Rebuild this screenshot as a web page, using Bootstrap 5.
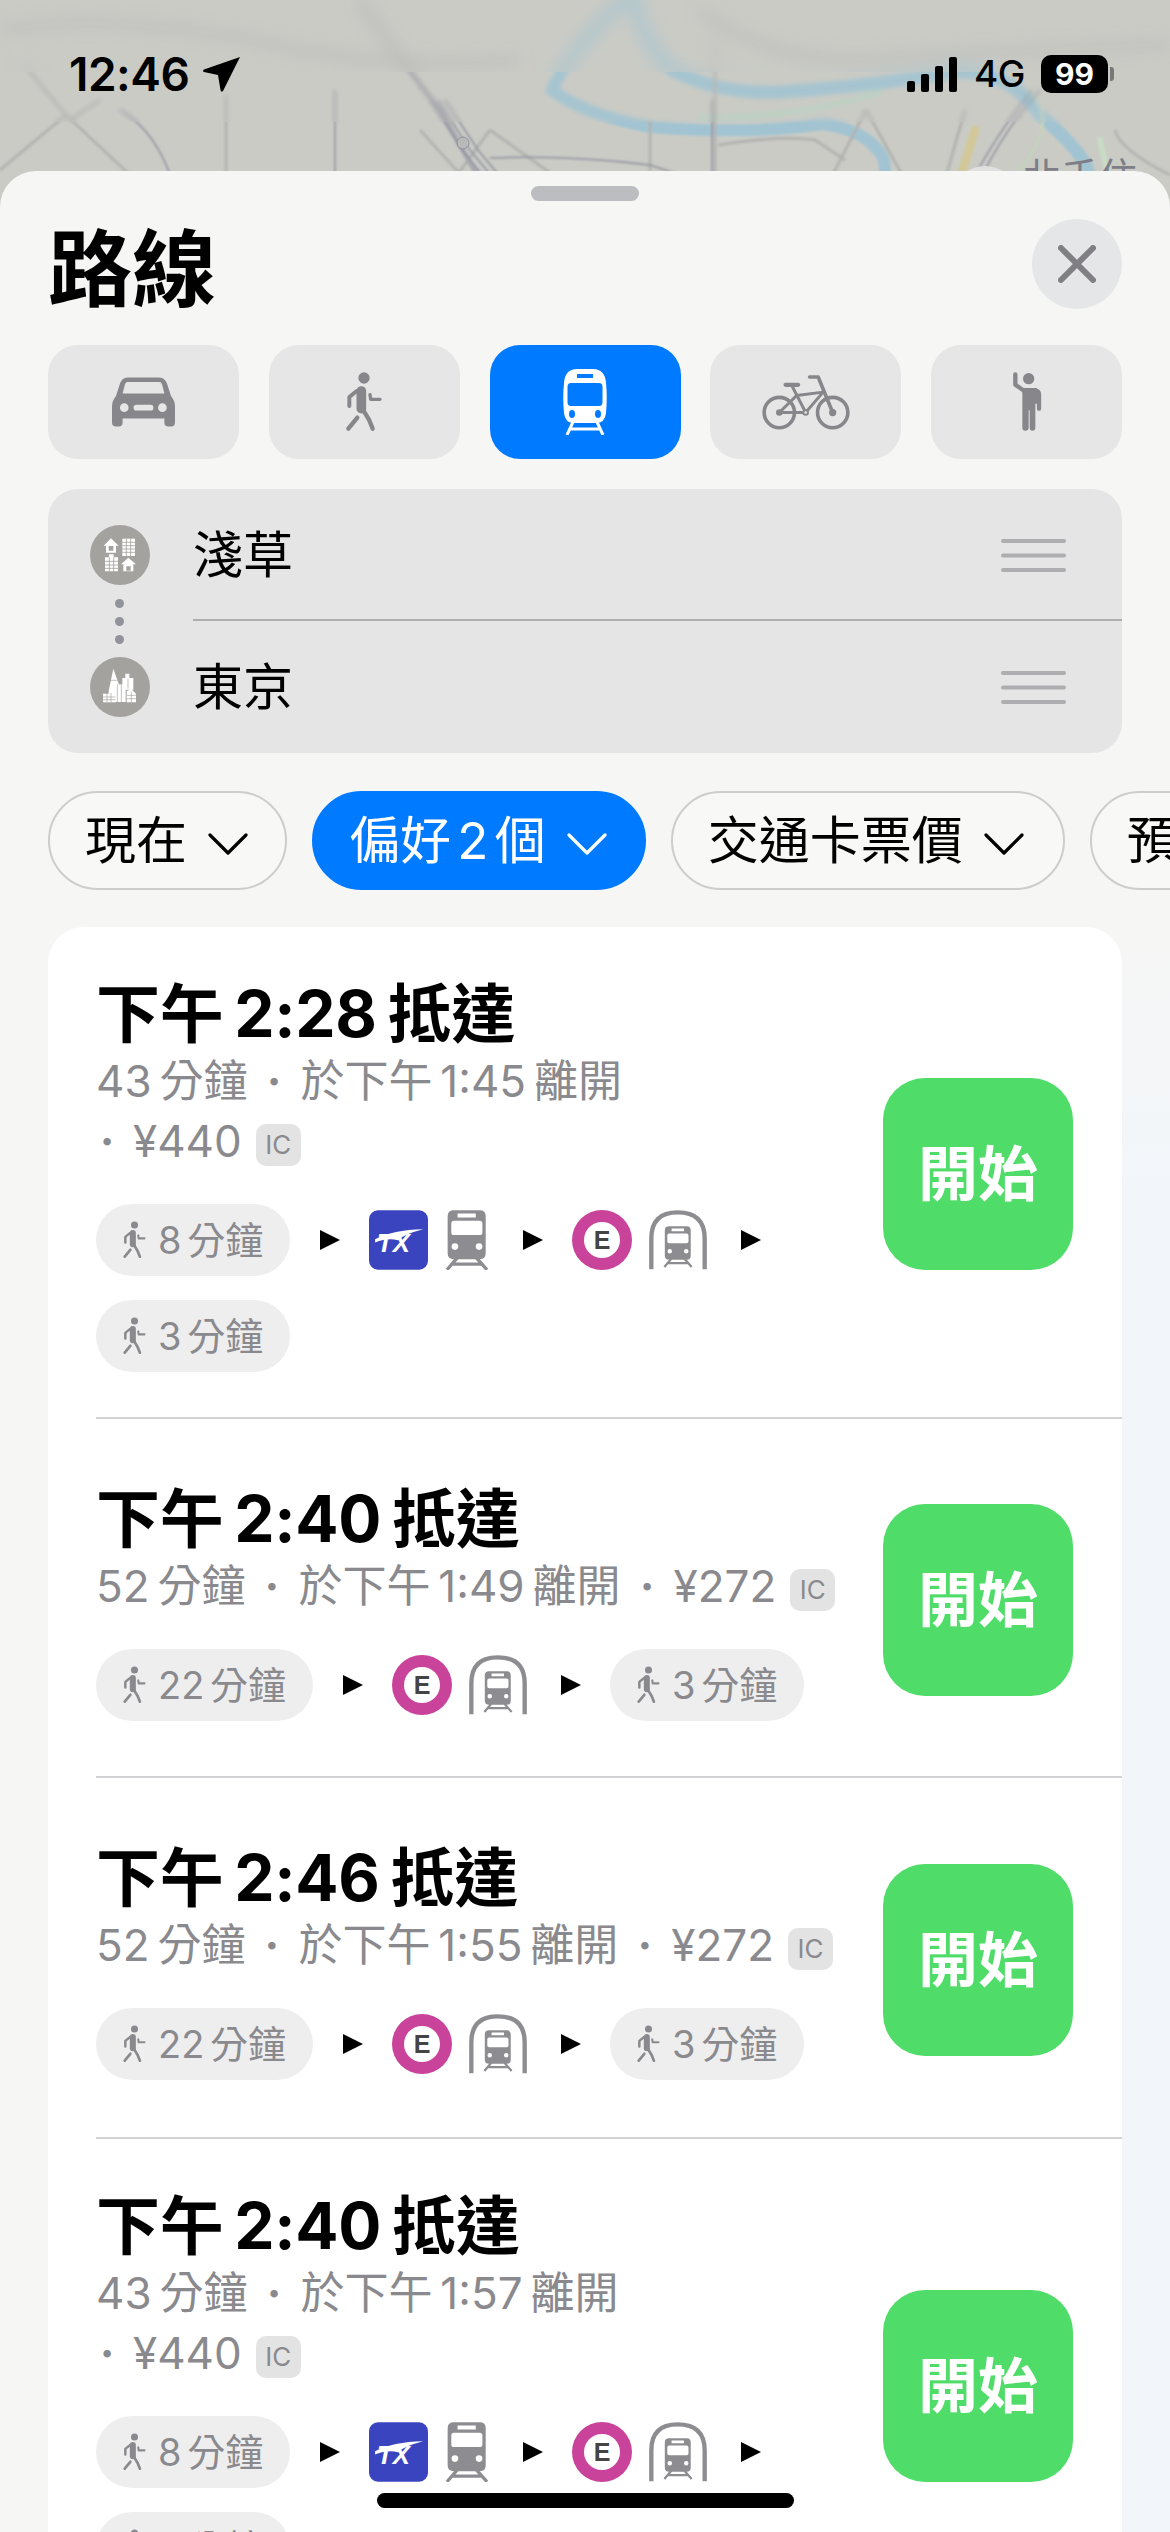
<!DOCTYPE html>
<html lang="zh-Hant">
<head>
<meta charset="utf-8">
<title>路線</title>
<link href="https://cdn.jsdelivr.net/npm/bootstrap@5.3.0/dist/css/bootstrap.min.css" rel="stylesheet">
<style>
html,body{margin:0;background:#c9cac4;}
body{font-family:Inter,"Noto Sans CJK TC",sans-serif;color:#000;}
.phone{position:relative;width:1170px;height:2532px;overflow:hidden;}
.mapbg{position:absolute;left:0;top:0;width:1170px;height:200px;}
.statusbar{position:relative;height:171px;padding:51px 56px 0 69px;}
.clock{font-size:46px;font-weight:600;line-height:46px;letter-spacing:-.5px;}
.arrowgap{margin-left:14px;}
.netlabel{font-size:37px;font-weight:500;line-height:46px;letter-spacing:-.5px;}
.batt{width:67px;height:38px;border-radius:10px;background:#000;color:#fff;font-size:30px;font-weight:700;line-height:38px;text-align:center;}
.battnub{width:4px;height:14px;border-radius:0 3px 3px 0;background:#777;margin-left:2px;}
.sheet{position:relative;height:2361px;border-radius:36px 36px 0 0;padding:15px 48px 0;background:#f6f6f5;}
.sheet-tint{position:absolute;right:0;top:760px;bottom:0;width:48px;background:linear-gradient(180deg,#f6f6f5,#f2f6fa 16%);}
.grabber{width:108px;height:15px;border-radius:8px;background:#bcbdc0;margin:0 auto 18px;}
.pagetitle{font-size:84px;font-weight:700;line-height:90px;margin:6px 0 -6px 0;}
.closer{width:90px;height:90px;border-radius:50%;background:#e5e6e7;border:0;padding:0;}
.modes{margin-top:36px;}
.mode{width:191px;height:114px;border-radius:30px;background:#e6e6e6;border:0;color:#87878b;}
.mode.on{background:#007aff;color:#fff;}
.locbox{position:relative;margin-top:30px;height:264px;border-radius:30px;background:#e5e5e6;}
.locrow{height:132px;padding-left:42px;}
.placeicon{width:60px;height:60px;flex:none;}
.locbody{margin-left:43px;padding-right:56px;font-size:50px;line-height:60px;}
.locrow:first-child .locbody{border-bottom:2px solid #aeaeb0;padding-top:2px;}
.handle{width:65px;height:33px;flex:none;}
.locdots{position:absolute;left:67px;top:110px;width:10px;}
.locdots i{display:block;width:9px;height:9px;border-radius:50%;background:#92929a;margin-bottom:9px;}
.chips{margin-top:38px;width:1200px;gap:25px;}
.chip{height:99px;border-radius:50px;border:2px solid #cdcdcd;background:#f8f8f7;color:#000;font-size:51px;line-height:95px;padding:0 37px 0 35px;white-space:nowrap;flex:none;word-spacing:-8px;}
.chip.on{background:#007aff;border-color:#007aff;color:#fff;}
.chip.chipwide{padding-right:39px;}
.chip svg{width:40px;height:22px;margin-left:21px;vertical-align:4px;}
.routes{margin-top:37px;background:#fff;border-radius:36px 36px 0 0;padding-left:48px;height:1700px;}
.route{border-bottom:2px solid #d2d2d4;padding-right:49px;align-items:flex-start;}
.route.tall{height:492px;}
.route.tall>.leftcol{padding-top:50px;}
.route.short{height:359px;}
.route.short>.leftcol{padding-top:63px;}
.route.short2{height:361px;}
.arrive{font-size:64px;font-weight:700;line-height:74px;white-space:nowrap;letter-spacing:-.3px;word-spacing:-4px;}
.meta{height:60px;font-size:44px;line-height:60px;color:#8a8a8e;white-space:nowrap;word-spacing:-4.5px;}
.sep{display:inline-block;width:53px;text-align:center;font-weight:700;}
.sep.sepfirst{width:22px;margin-right:15px;}
.ic{display:inline-block;min-width:45px;height:42px;border-radius:10px;background:#e3e3e3;font-size:26px;line-height:42px;text-align:center;margin-left:14px;vertical-align:3px;}
.legs{margin-top:33px;}
.legs+.legs{margin-top:24px;}
.walkpill{height:72px;border-radius:36px;background:#eee;color:#8a8a8e;font-size:38px;line-height:72px;padding:0 27px 0 26px;white-space:nowrap;flex:none;word-spacing:-5px;}
.walkpill svg{width:25px;height:42px;margin-right:11px;}
.tri{width:20px;height:20px;flex:none;margin:0 29px 0 30px;}
.lg{flex:none;height:60px;}
.lg+.tri{margin-left:34px;}
.lgpair{margin-right:17px;}
.go{width:190px;height:192px;border-radius:42px;background:#4fdc68;color:#fff;border:0;font-size:60px;font-weight:600;line-height:1;flex:none;padding:0;margin-top:4px;}
.homebar{position:absolute;left:377px;top:2493px;width:417px;height:15px;border-radius:8px;background:#000;}
</style>
</head>
<body>
<svg width="0" height="0" class="position-absolute">
  <defs>
    <symbol id="walk" viewBox="910 95 120 180">
      <circle cx="970" cy="113" r="17" fill="currentColor"/>
      <g fill="none" stroke="currentColor" stroke-linecap="round" stroke-linejoin="round">
        <path d="M962 152 V205" stroke-width="29"/>
        <path d="M965 205 L985 238 L996 265" stroke-width="13"/>
        <path d="M950 232 L923 265" stroke-width="13"/>
        <path d="M948 152 L926 170 V197" stroke-width="12"/>
        <path d="M988 163 L990 177 H1018" stroke-width="10"/>
      </g>
    </symbol>
    <symbol id="train" viewBox="285 60 133 180">
      <path fill="currentColor" fill-rule="evenodd" d="M312 60 H390 Q408 60 408 78 V190 Q408 208 390 208 H312 Q293 208 293 190 V78 Q293 60 312 60 Z M323 70 V82 H378 V70 Z M312 92 Q304 92 304 100 V127 Q304 135 312 135 H390 Q398 135 398 127 V100 Q398 92 390 92 Z M315 160 A10 10 0 1 0 315 180 A10 10 0 1 0 315 160 Z M388 160 A10 10 0 1 0 388 180 A10 10 0 1 0 388 160 Z"/>
      <path fill="none" stroke="currentColor" stroke-width="10" d="M322 204 L291 240 M380 204 L412 240 M308 223 H394"/>
    </symbol>
    <symbol id="trainmode" viewBox="0 0 44 66">
      <path fill="currentColor" fill-rule="evenodd" d="M14 0 H30 Q42 0 43 14 Q44.500 28 43 44 Q42 54 33 54 H11 Q2 54 1 44 Q-.5 28 1 14 Q2 0 14 0 Z M14 5 V9 H30 V5 Z M8 14 Q4.500 14 4.500 18 V33 Q4.500 37 8 37 H36 Q39.500 37 39.500 33 V18 Q39.500 14 36 14 Z M9 41 A3 4 0 1 0 9 49 A3 4 0 1 0 9 41 Z M35 41 A3 4 0 1 0 35 49 A3 4 0 1 0 35 41 Z"/>
      <path fill="none" stroke="currentColor" stroke-width="3" d="M10 53 L4 66 M34 53 L40 66 M7 60 H37"/>
    </symbol>
    <symbol id="tunnel" viewBox="895 60 172 180">
      <path fill="none" stroke="#8d8d91" stroke-width="13" d="M901 238 V145 Q901 67 980 67 Q1061 67 1061 145 V238"/>
      <use href="#train" x="936" y="103" width="90" height="134" color="#8d8d91"/>
    </symbol>
    <symbol id="txlogo" viewBox="60 60 174 175">
      <rect x="60" y="60" width="174" height="175" rx="26" fill="#3a44bf"/>
      <path fill="#fff" d="M78 145 Q130 118 220 116 Q165 130 145 148 Q115 140 78 155 Z"/>
      <text x="132" y="183" text-anchor="middle" fill="#fff" font-family="Liberation Sans" font-weight="700" font-style="italic" font-size="76">TX</text>
    </symbol>
    <symbol id="eline" viewBox="0 0 60 60">
      <circle cx="30" cy="30" r="30" fill="#c9439a"/>
      <circle cx="30" cy="30" r="18" fill="#fff"/>
      <text x="30" y="39" text-anchor="middle" fill="#444" font-family="Liberation Sans" font-weight="700" font-size="25">E</text>
    </symbol>
    <symbol id="triangle" viewBox="0 0 20 20"><path d="M0 0 L20 10 L0 20 Z" fill="#000"/></symbol>
    <symbol id="chev" viewBox="0 0 40 22"><path d="M2 2 L20 20 L38 2" fill="none" stroke="currentColor" stroke-width="3.2" stroke-linecap="round" stroke-linejoin="round"/></symbol>
    <symbol id="lines" viewBox="0 0 65 33"><rect y="0" width="65" height="4" rx="2" fill="#aeaeb0"/><rect y="14.5" width="65" height="4" rx="2" fill="#aeaeb0"/><rect y="29" width="65" height="4" rx="2" fill="#aeaeb0"/></symbol>
    <g id="mapshapes">
      <g fill="none" stroke-linecap="round">
        <path d="M634 -4 Q640 40 672 70 Q720 95 780 92 Q880 85 955 72 Q1010 70 1040 115 Q1075 145 1086 165 L1094 190" stroke="#a2c4d2" stroke-width="13"/>
        <path d="M624 0 Q570 50 552 90 Q585 115 650 127 Q750 135 822 124 Q870 130 884 160 L888 195" stroke="#a2c4d2" stroke-width="12"/>
        <path d="M700 118 Q800 118 880 92" stroke="#bcd1c2" stroke-width="6"/>
        <path d="M1020 170 Q1060 120 1030 90" stroke="#c4d3bc" stroke-width="3"/>
        <path d="M1100 140 L1110 185" stroke="#c9dcc4" stroke-width="6"/>
        <path d="M975 130 L962 172" stroke="#d3c89a" stroke-width="9"/>
      </g>
      <g fill="none" stroke="#b3b4b1" stroke-width="3">
        <path d="M0 170 L66 115 L130 175"/>
        <path d="M20 60 L70 120 L100 100"/>
        <path d="M226 95 L226 175"/>
        <path d="M420 130 L470 185"/>
        <path d="M490 130 L450 185"/>
        <path d="M490 130 L560 180"/>
        <path d="M650 120 L650 180"/>
        <path d="M715 40 L715 180"/>
        <path d="M718 145 Q780 135 815 140 L845 160"/>
        <path d="M866 110 L830 180"/>
        <path d="M866 110 L905 180"/>
        <path d="M965 110 L945 180"/>
        <path d="M1115 130 Q1120 150 1170 175"/>
        <path d="M0 30 Q120 10 300 50 Q420 70 520 60" stroke-width="6"/>
        <path d="M700 10 Q760 60 860 60 Q1000 50 1170 45" stroke-width="6"/>
        <path d="M360 0 Q400 60 440 110 L480 180" stroke="#a9a9af" stroke-width="5"/>
      </g>
      <g fill="none" stroke="#8f909f" stroke-width="1.500">
        <path d="M120 110 Q155 130 172 180"/>
        <path d="M335 90 V180"/>
        <path d="M430 100 L462 150 L495 190"/>
        <path d="M438 100 L470 150 L503 190"/>
        <path d="M445 100 L478 150 L511 190"/>
        <path d="M490 158 Q570 155 650 165 L695 180"/>
        <path d="M712 100 V180"/>
        <path d="M1040 90 Q1005 130 985 170"/>
        <path d="M1032 90 Q1000 130 978 170"/>
      </g>
    </g>
  </defs>
</svg>

<div class="phone">
  <svg class="mapbg" viewBox="0 0 1170 200">
    <defs>
      <filter id="b1" x="-5%" y="-20%" width="110%" height="140%"><feGaussianBlur stdDeviation="8"/></filter>
      <filter id="b2" x="-5%" y="-20%" width="110%" height="140%"><feGaussianBlur stdDeviation="2"/></filter>
      <filter id="b3" x="-5%" y="-20%" width="110%" height="140%"><feGaussianBlur stdDeviation=".8"/></filter>
      <clipPath id="c1"><rect width="1170" height="72"/></clipPath>
      <clipPath id="c2"><rect y="72" width="1170" height="50"/></clipPath>
      <clipPath id="c3"><rect y="122" width="1170" height="80"/></clipPath>
    </defs>
    <rect width="1170" height="200" fill="#cacbc5"/>
    <g clip-path="url(#c1)" opacity=".7"><use href="#mapshapes" filter="url(#b1)"/></g>
    <g clip-path="url(#c2)" opacity=".9"><use href="#mapshapes" filter="url(#b2)"/></g>
    <g clip-path="url(#c3)"><use href="#mapshapes" filter="url(#b3)"/></g>
    <circle cx="463" cy="143" r="6" fill="#b9bab8" stroke="#8f909f"/>
    <path d="M965 172 Q985 160 1005 172 Z" fill="#dfe0df"/>
    <text x="1023" y="190" font-family="Noto Sans CJK TC" font-size="38" fill="#7d7e88">北千住</text>
  </svg>

  <div class="statusbar d-flex align-items-start justify-content-between">
    <div class="d-flex align-items-center">
      <span class="clock">12:46</span>
      <svg width="38" height="36" viewBox="0 0 38 36" class="arrowgap"><path d="M37 1 L20 35 Q18 37 17.500 34 L15 19 L1 16 Q-1 15 1 13.500 Z" fill="#000"/></svg>
    </div>
    <div class="d-flex align-items-center">
      <svg width="51" height="35" viewBox="0 0 51 35"><rect x="0" y="24" width="8" height="11" rx="2"/><rect x="14" y="17" width="8" height="18" rx="2"/><rect x="28" y="9" width="8" height="26" rx="2"/><rect x="42" y="0" width="8" height="35" rx="2"/></svg>
      <span class="netlabel ms-3 me-3">4G</span>
      <div class="batt">99</div>
      <div class="battnub"></div>
    </div>
  </div>

  <div class="sheet">
    <div class="sheet-tint"></div>
    <div class="grabber"></div>
    <div class="d-flex justify-content-between align-items-start">
      <h1 class="pagetitle">路線</h1>
      <button class="closer d-flex align-items-center justify-content-center" type="button" aria-label="關閉">
        <svg width="38" height="38" viewBox="0 0 38 38"><path d="M3 3 L35 35 M35 3 L3 35" stroke="#808084" stroke-width="6" stroke-linecap="round"/></svg>
      </button>
    </div>

    <div class="modes d-flex justify-content-between">
      <button class="mode d-flex align-items-center justify-content-center" type="button" aria-label="駕駛">
        <svg width="63" height="50" viewBox="215 113 190 150"><path fill="currentColor" fill-rule="evenodd" d="M215 200 Q215 185 227 170 L240 130 Q246 114 265 114 H355 Q373 114 380 130 L393 170 Q405 185 405 200 V250 Q405 262 393 262 H385 Q373 262 373 250 V238 H247 V250 Q247 262 235 262 H227 Q215 262 215 250 Z M262 128 Q256 128 254 135 L247 162 H373 L366 135 Q364 128 358 128 Z M252 192 A13 13 0 1 0 252 218 A13 13 0 1 0 252 192 Z M367 192 A13 13 0 1 0 367 218 A13 13 0 1 0 367 192 Z M289 196 A9 9 0 0 0 289 214 H331 A9 9 0 0 0 331 196 Z"/></svg>
      </button>
      <button class="mode d-flex align-items-center justify-content-center" type="button" aria-label="步行">
        <svg width="40" height="60"><use href="#walk"/></svg>
      </button>
      <button class="mode on d-flex align-items-center justify-content-center" type="button" aria-label="大眾運輸">
        <svg width="44" height="66"><use href="#trainmode"/></svg>
      </button>
      <button class="mode d-flex align-items-center justify-content-center" type="button" aria-label="單車">
        <svg width="90" height="56" viewBox="360 100 272 170"><g fill="none" stroke="currentColor" stroke-linecap="round" stroke-linejoin="round"><circle cx="415" cy="217" r="46" stroke-width="11"/><circle cx="577" cy="217" r="46" stroke-width="11"/><path d="M507 109 H533 L577 217" stroke-width="11"/><path d="M434 133 H472" stroke-width="13"/><path d="M453 135 L495 217" stroke-width="9"/><path d="M468 165 L548 155 L495 217 M468 165 L415 217 H495" stroke-width="9"/></g><circle cx="415" cy="217" r="10" fill="currentColor"/><circle cx="577" cy="217" r="11" fill="currentColor"/><circle cx="495" cy="217" r="10" fill="currentColor"/><circle cx="495" cy="217" r="4" fill="#e6e6e6"/></svg>
      </button>
      <button class="mode d-flex align-items-center justify-content-center" type="button" aria-label="叫車">
        <svg width="30" height="60" viewBox="1115 95 90 180"><circle cx="1165" cy="115" r="17" fill="currentColor"/><g fill="none" stroke="currentColor" stroke-linecap="round" stroke-linejoin="round"><path d="M1125 102 V133 L1152 152" stroke-width="13"/><path d="M1150 150 H1183 Q1196 150 1196 163 V205" stroke-width="13"/></g><path fill="currentColor" d="M1146 143 H1190 V190 H1185 V262 Q1185 271 1176 271 Q1168 271 1168 262 V210 H1165 V262 Q1165 271 1155 271 Q1146 271 1146 262 Z"/></svg>
      </button>
    </div>

    <div class="locbox">
      <div class="locrow d-flex align-items-center">
        <svg class="placeicon" viewBox="90 75 180 180">
          <circle cx="180" cy="165" r="90" fill="#a3a29e"/>
          <g fill="#fff">
            <path fill-rule="evenodd" d="M131 137 L153 115 L176 137 L168 137 V158 H138 V137 Z M146 138 V152 H160 V138 Z"/>
            <path d="M187 116 H225 V168 H187 Z"/>
            <path d="M135 172 H147 V163 H161 V172 H174 V214 H135 Z"/>
            <path fill-rule="evenodd" d="M183 193 L205 173 L228 193 L220 193 V214 H190 V193 Z M199 199 V212 H212 V199 Z"/>
          </g>
          <g stroke="#a3a29e" stroke-width="2.500"><path d="M187 127 H225 M187 137 H225 M187 147 H225 M187 157 H225 M199 116 V168 M212 116 V168 M135 184 H174 M135 195 H174 M135 205 H174 M148 172 V214 M161 172 V214"/></g>
        </svg>
        <div class="locbody flex-grow-1 align-self-stretch d-flex align-items-center justify-content-between">
          <span>淺草</span>
          <svg class="handle"><use href="#lines"/></svg>
        </div>
      </div>
      <div class="locrow d-flex align-items-center">
        <svg class="placeicon" viewBox="90 470 180 180">
          <circle cx="180" cy="560" r="90" fill="#a3a29e"/>
          <g fill="#fff">
            <path d="M146 572 L160 505 L176 550 V605 H146 Z"/>
            <path d="M160 552 H197 V605 H160 Z"/>
            <path d="M187 533 H196 V520 H208 V533 H220 V568 H187 Z"/>
            <path d="M129 580 H166 V606 H129 Z"/>
            <path d="M200 572 L214 566 L228 580 V606 H200 Z"/>
          </g>
          <g stroke="#a3a29e" stroke-width="2"><path d="M129 590 H166 M129 598 H166 M141 578 V606 M153 578 V606 M172 552 V605 M184 552 V605 M200 585 H228 M200 595 H228 M214 574 V606 M152 540 H172 M204 535 V565"/></g>
        </svg>
        <div class="locbody flex-grow-1 align-self-stretch d-flex align-items-center justify-content-between">
          <span>東京</span>
          <svg class="handle"><use href="#lines"/></svg>
        </div>
      </div>
      <div class="locdots"><i></i><i></i><i></i></div>
    </div>

    <div class="chips d-flex">
      <div class="chip">現在<svg><use href="#chev"/></svg></div>
      <div class="chip on">偏好 2 個<svg><use href="#chev"/></svg></div>
      <div class="chip chipwide">交通卡票價<svg><use href="#chev"/></svg></div>
      <div class="chip">預設</div>
    </div>

    <div class="routes mx-0">
      <div class="route tall d-flex justify-content-between">
        <div class="leftcol">
          <div class="arrive">下午 2:28 抵達</div>
          <div class="meta">43 分鐘<span class="sep">·</span>於下午 1:45 離開</div>
          <div class="meta"><span class="sep sepfirst">·</span>¥440<span class="ic">IC</span></div>
          <div class="legs d-flex align-items-center">
            <div class="walkpill d-flex align-items-center"><svg><use href="#walk"/></svg>8 分鐘</div>
            <svg class="tri"><use href="#triangle"/></svg>
            <svg class="lg lgpair" width="59"><use href="#txlogo"/></svg>
            <svg class="lg" width="44" style="color:#8d8d91"><use href="#train"/></svg>
            <svg class="tri"><use href="#triangle"/></svg>
            <svg class="lg lgpair" width="60"><use href="#eline"/></svg>
            <svg class="lg" width="58"><use href="#tunnel"/></svg>
            <svg class="tri"><use href="#triangle"/></svg>
          </div>
          <div class="legs d-flex align-items-center">
            <div class="walkpill d-flex align-items-center"><svg><use href="#walk"/></svg>3 分鐘</div>
          </div>
        </div>
        <button class="go align-self-center" type="button">開始</button>
      </div>

      <div class="route short d-flex justify-content-between">
        <div class="leftcol">
          <div class="arrive">下午 2:40 抵達</div>
          <div class="meta">52 分鐘<span class="sep">·</span>於下午 1:49 離開<span class="sep">·</span>¥272<span class="ic">IC</span></div>
          <div class="legs d-flex align-items-center">
            <div class="walkpill d-flex align-items-center"><svg><use href="#walk"/></svg>22 分鐘</div>
            <svg class="tri"><use href="#triangle"/></svg>
            <svg class="lg lgpair" width="60"><use href="#eline"/></svg>
            <svg class="lg" width="58"><use href="#tunnel"/></svg>
            <svg class="tri"><use href="#triangle"/></svg>
            <div class="walkpill d-flex align-items-center"><svg><use href="#walk"/></svg>3 分鐘</div>
          </div>
        </div>
        <button class="go align-self-center" type="button">開始</button>
      </div>

      <div class="route short short2 d-flex justify-content-between">
        <div class="leftcol">
          <div class="arrive">下午 2:46 抵達</div>
          <div class="meta">52 分鐘<span class="sep">·</span>於下午 1:55 離開<span class="sep">·</span>¥272<span class="ic">IC</span></div>
          <div class="legs d-flex align-items-center">
            <div class="walkpill d-flex align-items-center"><svg><use href="#walk"/></svg>22 分鐘</div>
            <svg class="tri"><use href="#triangle"/></svg>
            <svg class="lg lgpair" width="60"><use href="#eline"/></svg>
            <svg class="lg" width="58"><use href="#tunnel"/></svg>
            <svg class="tri"><use href="#triangle"/></svg>
            <div class="walkpill d-flex align-items-center"><svg><use href="#walk"/></svg>3 分鐘</div>
          </div>
        </div>
        <button class="go align-self-center" type="button">開始</button>
      </div>

      <div class="route tall d-flex justify-content-between">
        <div class="leftcol">
          <div class="arrive">下午 2:40 抵達</div>
          <div class="meta">43 分鐘<span class="sep">·</span>於下午 1:57 離開</div>
          <div class="meta"><span class="sep sepfirst">·</span>¥440<span class="ic">IC</span></div>
          <div class="legs d-flex align-items-center">
            <div class="walkpill d-flex align-items-center"><svg><use href="#walk"/></svg>8 分鐘</div>
            <svg class="tri"><use href="#triangle"/></svg>
            <svg class="lg lgpair" width="59"><use href="#txlogo"/></svg>
            <svg class="lg" width="44" style="color:#8d8d91"><use href="#train"/></svg>
            <svg class="tri"><use href="#triangle"/></svg>
            <svg class="lg lgpair" width="60"><use href="#eline"/></svg>
            <svg class="lg" width="58"><use href="#tunnel"/></svg>
            <svg class="tri"><use href="#triangle"/></svg>
          </div>
          <div class="legs d-flex align-items-center">
            <div class="walkpill d-flex align-items-center"><svg><use href="#walk"/></svg>3 分鐘</div>
          </div>
        </div>
        <button class="go align-self-center" type="button">開始</button>
      </div>
    </div>
  </div>
  <div class="homebar"></div>
</div>
<script src="https://cdn.jsdelivr.net/npm/bootstrap@5.3.0/dist/js/bootstrap.bundle.min.js"></script>
</body>
</html>
